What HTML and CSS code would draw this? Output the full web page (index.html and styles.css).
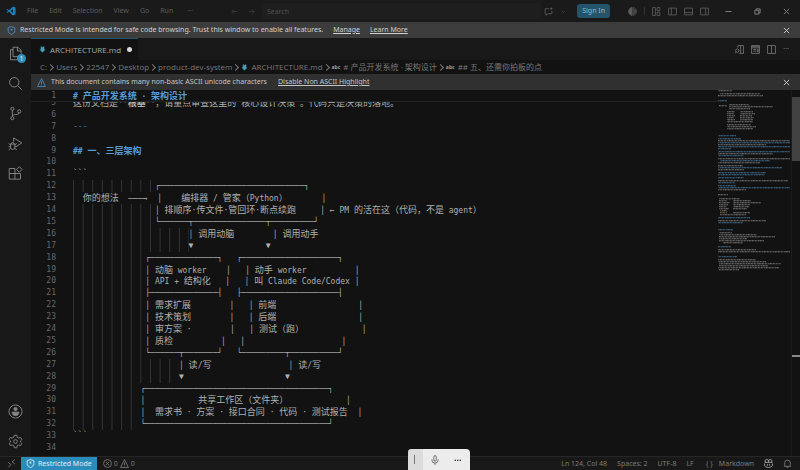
FILE: index.html
```html
<!DOCTYPE html>
<html lang="zh-CN">
<head>
    <meta charset="UTF-8">
    <meta name="viewport" content="width=device-width, initial-scale=1.0">
    <title>ARCHITECTURE.md</title>
    <link rel="stylesheet" href="styles.css">
</head>
<body>
    <header class="titlebar">
        <svg class="logo" viewBox="0 0 20 20"><path d="M14 1l5 2v14l-5 2-8-7.500L2.500 14 1 13l3.500-3L1 7l1.500-1L6 8.500zM14 6l-5 4 5 4z" fill="#1f7fb8" fill-rule="evenodd"/></svg>
        <nav class="menu">
            <button>File</button>
            <button>Edit</button>
            <button>Selection</button>
            <button>View</button>
            <button>Go</button>
            <button>Run</button>
            <button aria-label="More">···</button>
        </nav>
        <div class="history">
            <button aria-label="Back"><svg class="icon" viewBox="0 0 16 16"><path d="M14 8H2M7 3L2 8l5 5"/></svg></button>
            <button aria-label="Forward"><svg class="icon" viewBox="0 0 16 16"><path d="M2 8h12M9 3l5 5-5 5"/></svg></button>
        </div>
        <input class="search" type="text" placeholder="Search" aria-label="Search">
        <div class="chat">
            <button aria-label="Chat"><svg class="icon wide" viewBox="0 0 16 16"><path d="M9 3H2v9h2v3l3-3h7V7M11 3h4M13 1v4"/></svg></button>
            <button aria-label="Chat menu"><svg class="icon small" viewBox="0 0 16 16"><path d="M3 6l5 5 5-5"/></svg></button>
        </div>
        <button class="signin">Sign In</button>
        <div class="layout">
            <button aria-label="Agents"><svg class="icon wide" viewBox="0 0 16 16"><path d="M7 1v14C3 14 1 11 1 8s2-6 6-7z" fill="currentColor"/><path d="M9 1c4 1 6 4 6 7s-2 6-6 7zM11 4v8M13 5v6"/></svg></button>
            <span class="divider"></span>
            <button aria-label="Customize layout"><svg class="icon wide" viewBox="0 0 16 16"><path d="M1 1h5v14H1zM9 1h5v5H9zM9 9h5v6H9z"/></svg></button>
            <button aria-label="Toggle side bar"><svg class="icon wide" viewBox="0 0 16 16"><path d="M1 2h14v12H1zM6 2v12"/></svg></button>
            <button aria-label="Toggle panel"><svg class="icon wide" viewBox="0 0 16 16"><path d="M1 2h14v12H1zM1 10h14"/></svg></button>
            <button aria-label="Toggle secondary side bar"><svg class="icon wide" viewBox="0 0 16 16"><path d="M1 2h14v12H1zM10 2v12"/></svg></button>
        </div>
        <div class="window-buttons">
            <button aria-label="Minimize"><svg class="icon" viewBox="0 0 16 16"><path d="M1 8h14"/></svg></button>
            <button aria-label="Restore"><svg class="icon" viewBox="0 0 16 16"><path d="M2 5h9v9H2zM5 5V2h9v9h-3"/></svg></button>
            <button aria-label="Close"><svg class="icon" viewBox="0 0 16 16"><path d="M2 2l12 12M14 2L2 14"/></svg></button>
        </div>
    </header>

    <div class="banner">
        <svg class="icon wide shield" viewBox="0 0 16 16"><path d="M8 1l6 2v5c0 4-3 6-6 7-3-1-6-3-6-7V3z"/><path d="M8 5v3" stroke-width="3"/></svg>
        <span>Restricted Mode is intended for safe code browsing. Trust this window to enable all features.</span>
        <a href="#">Manage</a>
        <a href="#">Learn More</a>
        <button class="close" aria-label="Close banner"><svg class="icon" viewBox="0 0 16 16"><path d="M2 2l12 12M14 2L2 14"/></svg></button>
    </div>

    <div class="workbench">
        <aside class="activity">
            <button aria-label="Explorer">
                <svg viewBox="0 0 24 24"><path d="M8 17V2h8l5 5v10zM15 2v6h6M8 6H4v16h12v-5"/></svg>
                <span class="badge">1</span>
            </button>
            <button aria-label="Search"><svg viewBox="0 0 24 24"><circle cx="10" cy="10" r="7.500"/><path d="M15.500 15.500L22 22"/></svg></button>
            <button aria-label="Source control"><svg viewBox="0 0 24 24"><circle cx="7" cy="4.500" r="2.500"/><circle cx="7" cy="19.500" r="2.500"/><circle cx="18" cy="8.500" r="2.500"/><path d="M7 7v10M18 11c0 4-11 1-11 6"/></svg></button>
            <button aria-label="Run and debug"><svg viewBox="0 0 24 24"><path d="M9 9V3l13 8-9 6"/><path d="M4 13h7v5a3.500 3.500 0 0 1-7 0zM5 13a2.500 2.500 0 0 1 5 0M1 12l3 2M14 12l-3 2M1 17h3M11 17h3M1 22l3-2M14 22l-3-2"/></svg></button>
            <button aria-label="Extensions"><svg viewBox="0 0 24 24"><path d="M11 4H2v17h18v-9H2M11 4v17"/><path d="M18 1l4.500 4.500L18 10l-4.500-4.500z"/></svg></button>
            <span class="spacer"></span>
            <button aria-label="Accounts"><svg viewBox="0 0 24 24"><circle cx="12" cy="12" r="10.500"/><circle cx="12" cy="8" r="2.500" fill="currentColor"/><path d="M6.500 13h11c0 3-2 5.500-5.500 5.500S6.500 16 6.500 13z" fill="currentColor"/></svg></button>
            <button aria-label="Settings"><svg viewBox="0 0 24 24"><path d="M10 2h4l.7 3.200 2.300 1.300 3.200-1 2 3.500-2.400 2.200v1.600l2.400 2.200-2 3.500-3.200-1-2.300 1.300L14 22h-4l-.7-3.200L7 17.500l-3.200 1-2-3.500 2.400-2.200v-1.600L1.800 9l2-3.500 3.200 1 2.300-1.300z"/><circle cx="12" cy="12" r="3"/></svg></button>
        </aside>

        <main class="editor">
            <div class="tabs">
                <div class="tab">
                    <svg class="md" viewBox="0 0 16 16"><path d="M4 1h3v2h2V1h3v7h3l-7 7-7-7h3z"/></svg>
                    <span>ARCHITECTURE.md</span>
                    <span class="dirty"></span>
                </div>
                <div class="tab-actions">
                    <button aria-label="Open preview"><svg class="icon wide" viewBox="0 0 16 16"><path d="M5 5V1h10v14H8M10 1v14"/><circle cx="4" cy="10" r="3"/><path d="M2 12l-2 3"/></svg></button>
                    <button aria-label="Open changes"><svg class="icon wide" viewBox="0 0 16 16"><path d="M1 1h14v14H1zM1 5h14M4 8h5M4 11h5M11 8h2v4h-2zM1 3h14"/></svg></button>
                    <button aria-label="Split editor"><svg class="icon wide" viewBox="0 0 16 16"><path d="M1 1h14v14H1zM8 1v14"/></svg></button>
                    <button aria-label="More actions">···</button>
                </div>
            </div>

            <nav class="breadcrumbs">
                <span>C:</span>
                <span>Users</span>
                <span>22547</span>
                <span>Desktop</span>
                <span>product-dev-system</span>
                <span><svg class="md" viewBox="0 0 16 16"><path d="M4 1h3v2h2V1h3v7h3l-7 7-7-7h3z"/></svg>ARCHITECTURE.md</span>
                <span><b>abc</b># 产品开发系统 · 架构设计</span>
                <span><b>abc</b>## 五、还需你拍板的点</span>
            </nav>

            <div class="notice">
                <svg class="icon wide warn" viewBox="0 0 16 16"><path d="M8 1l7 14H1zM8 6v5M8 12v1"/></svg>
                <span>This document contains many non-basic ASCII unicode characters</span>
                <a href="#">Disable Non ASCII Highlight</a>
                <button class="close" aria-label="Close notice"><svg class="icon" viewBox="0 0 16 16"><path d="M2 2l12 12M14 2L2 14"/></svg></button>
            </div>

            <div class="panes">
                <div class="code">
                    <div class="sticky"></div>
                    <div class="lines"></div>
                </div>
                <canvas class="minimap" width="73" height="366"></canvas>
                <div class="scrollbar">
                    <div class="thumb"></div>
                    <div class="marker"></div>
                </div>
            </div>
        </main>
    </div>

    <footer class="status">
        <button class="remote" aria-label="Remote"><svg class="icon wide" viewBox="0 0 16 16"><path d="M2 6l5 4-5 5M14 1L9 5l5 4"/></svg></button>
        <button class="restricted"><svg class="icon wide" viewBox="0 0 16 16"><path d="M8 1l6 2v5c0 4-3 6-6 7-3-1-6-3-6-7V3z"/><path d="M8 5v3" stroke-width="3"/></svg>Restricted Mode</button>
        <button class="problems"><svg class="icon wide" viewBox="0 0 16 16"><circle cx="8" cy="8" r="7"/><path d="M5 5l6 6M11 5l-6 6"/></svg>0<svg class="icon wide" viewBox="0 0 16 16"><path d="M8 1l7 14H1zM8 6v5M8 12v1"/></svg>0</button>
        <div class="status-right">
            <button>Ln 124, Col 48</button>
            <button>Spaces: 2</button>
            <button>UTF-8</button>
            <button>LF</button>
            <button><span class="braces">{ }</span>Markdown</button>
            <button aria-label="Copilot"><svg class="icon wide bright" viewBox="0 0 16 16"><path d="M2 7V3q0-2 3-2 3 0 3 2 0-2 3-2 3 0 3 2v4M2 6h12M8 3v3M1 8v4c3 4 11 4 14 0V8M6 9v3M10 9v3"/></svg></button>
            <button aria-label="Notifications"><svg class="icon wide" viewBox="0 0 16 16"><path d="M3 12V7a5 5 0 0 1 10 0v5l1 1H2zM6 13a2 2 0 0 0 4 0"/></svg></button>
        </div>
    </footer>

    <div class="voice">
        <span class="grip"></span>
        <button aria-label="Microphone"><svg viewBox="0 0 16 16"><path d="M6 3a2 2 0 0 1 4 0v5a2 2 0 0 1-4 0zM3 7v1a5 5 0 0 0 10 0V7M8 13v3"/></svg></button>
        <button class="dots" aria-label="Voice options">···</button>
    </div>

    <script src="script.js"></script>
</body>
</html>
```
FILE: styles.css
```css
* {
    box-sizing: border-box;
}

body {
    margin: 0;
    height: 100vh;
    display: flex;
    flex-direction: column;
    overflow: hidden;
    background: #121212;
    color: #8c8c8c;
    font-family: "Noto Sans", "Noto Sans CJK SC", sans-serif;
    font-size: 7px;
    line-height: 12px;
}

button {
    display: flex;
    align-items: center;
    padding: 0;
    border: none;
    background: none;
    color: inherit;
    font: inherit;
    white-space: nowrap;
}

a {
    color: inherit;
}

svg {
    display: block;
    flex: none;
    fill: none;
    stroke: currentColor;
}

.icon {
    width: 7px;
    height: 7px;
    stroke-width: 2;
}

.icon.wide {
    width: 9px;
    height: 9px;
    stroke-width: 1.5;
}

.icon.small {
    width: 5px;
    height: 5px;
}

/* Title bar */
.titlebar {
    display: flex;
    align-items: center;
    height: 22px;
    flex: none;
    padding: 0 10px 0 6px;
    background: #1a1a1a;
    color: #5c5c5c;
}

.logo {
    width: 10px;
    height: 10px;
    stroke: none;
}

.menu {
    display: flex;
    gap: 11px;
    margin-left: 11px;
}

.menu button:last-child {
    margin-left: 3px;
}

.history {
    display: flex;
    gap: 10px;
    margin: 0 7px 0 38px;
    color: #3c3c3c;
}

.search {
    flex: 1;
    min-width: 0;
    height: 16px;
    padding: 0 5px;
    border: none;
    border-radius: 3px;
    background: #1e1e1e;
    color: #545454;
    font: inherit;
}

.search::placeholder {
    color: #505050;
}

.chat {
    display: flex;
    gap: 8px;
    margin: 0 11px 0 3px;
}

.signin {
    height: 14px;
    padding: 0 5px;
    border-radius: 3px;
    background: #23546b;
    color: #9cb4c0;
}

.layout {
    display: flex;
    align-items: center;
    gap: 7px;
    margin-left: 18px;
}

.divider {
    width: 1px;
    height: 8px;
    background: #333;
}

.window-buttons {
    display: flex;
    gap: 22px;
    margin-left: 16px;
    color: #8a8a8a;
}

/* Restricted mode banner */
.banner {
    display: flex;
    align-items: center;
    gap: 10px;
    height: 16px;
    flex: none;
    padding: 0 10px 0 7px;
    background: #3c3c3c;
    color: #d0d0d0;
}

.shield,
.warn {
    margin-right: -6px;
    color: #4a90c8;
}

.close {
    margin-left: auto;
    color: #d8d8d8;
}

/* Activity bar */
.workbench {
    display: flex;
    flex: 1;
    min-height: 0;
}

.activity {
    display: flex;
    flex-direction: column;
    align-items: center;
    gap: 15px;
    width: 31px;
    padding: 8px 0 7px;
    background: #181818;
    color: #868686;
}

.activity button {
    position: relative;
}

.activity svg {
    width: 15px;
    height: 15px;
    stroke-width: 1.5;
}

.badge {
    position: absolute;
    right: -3px;
    bottom: -2px;
    width: 9px;
    height: 9px;
    border-radius: 50%;
    background: #2f8fbe;
    color: #e0eef5;
    font-size: 7px;
    line-height: 9px;
    text-align: center;
}

.spacer {
    flex: 1;
}

/* Editor */
.editor {
    display: flex;
    flex-direction: column;
    flex: 1;
    min-width: 0;
}

.tabs {
    display: flex;
    justify-content: space-between;
    height: 22px;
    flex: none;
    background: #181818;
}

.tab {
    display: flex;
    align-items: center;
    gap: 4px;
    padding: 0 6px 0 8px;
    border-top: 1px solid #23536a;
    background: #121212;
    color: #a8a8a8;
    font-family: "Open Sans", sans-serif;
    font-size: 8px;
}

.md {
    width: 7px;
    height: 7px;
    fill: #4a9cb4;
    stroke: none;
}

.dirty {
    width: 5px;
    height: 5px;
    margin-left: 2px;
    border-radius: 50%;
    background: #d8d8d8;
}

.tab-actions {
    display: flex;
    align-items: center;
    gap: 7px;
    padding-right: 11px;
    color: #747474;
}

.breadcrumbs {
    display: flex;
    align-items: center;
    height: 14px;
    flex: none;
    padding-left: 9px;
    color: #787878;
    font-family: "Open Sans", "Noto Sans CJK SC", sans-serif;
    font-size: 8px;
    white-space: nowrap;
}

.breadcrumbs span {
    display: flex;
    align-items: center;
    gap: 3px;
}

.breadcrumbs span + span::before {
    content: "";
    width: 4px;
    height: 4px;
    margin-left: 1px;
    border: solid #787878;
    border-width: 1px 1px 0 0;
    transform: rotate(45deg);
}

.breadcrumbs b {
    color: #a0a0a0;
    font-size: 5px;
}

.notice {
    display: flex;
    align-items: center;
    gap: 11px;
    height: 16px;
    flex: none;
    padding: 0 10px 0 6px;
    background: #303030;
    color: #c4c4c4;
}

.panes {
    display: flex;
    flex: 1;
    min-height: 0;
}

.code {
    display: flex;
    flex-direction: column;
    flex: 1;
    min-width: 0;
    overflow: hidden;
    color: #b0b0b0;
    font-family: "DejaVu Sans Mono", "Noto Sans CJK SC", monospace;
    font-size: 8px;
}

.sticky {
    z-index: 1;
    flex: none;
    height: 12px;
    border-bottom: 1px solid #222;
    background: #121212;
}

/* the first visible line is scrolled half under the sticky heading */
.lines {
    display: grid;
    grid-auto-rows: minmax(0, 1fr);
    flex: 1;
    min-height: 0;
    margin-top: -5px;
    padding-bottom: 2px;
}

.line {
    display: flex;
    white-space: pre;
}

.number {
    width: 25px;
    margin-right: 17px;
    color: #686868;
    text-align: right;
}

.guides {
    background: linear-gradient(90deg, #343434 1px, transparent 1px) 0 0 / 2ch 100%;
}

.cjk {
    font-size: 9px;
}

.heading {
    color: #569cd6;
    font-weight: bold;
}

.rule {
    color: #4682b0;
}

.minimap {
    flex: none;
    width: 73px;
    height: 366px;
}

.scrollbar {
    width: 9px;
    flex: none;
    border-left: 1px solid #1c1c1c;
}

.thumb {
    height: 64px;
    margin-top: 7px;
    background: #424242;
}

.marker {
    height: 2px;
    margin-top: 194px;
    background: #8a8a8a;
}

/* Status bar */
.status {
    display: flex;
    align-items: center;
    height: 14px;
    flex: none;
    border-top: 1px solid #262626;
    background: #181818;
    color: #7c7c7c;
}

.remote {
    width: 21px;
    padding-left: 7px;
}

.restricted {
    gap: 3px;
    height: 13px;
    padding: 0 5px;
    background: #2a8cba;
    color: #e0eef5;
}

.problems {
    gap: 2px;
    margin-left: 6px;
}

.status-right {
    display: flex;
    align-items: center;
    gap: 10px;
    margin-left: auto;
    padding-right: 8px;
}

.braces {
    margin: 0 6px 0 2px;
}

.bright {
    color: #b0b0b0;
}

/* Floating voice typing bar */
.voice {
    position: absolute;
    left: 51%;
    bottom: 0;
    display: flex;
    align-items: center;
    gap: 14px;
    height: 21px;
    padding-right: 8px;
    overflow: hidden;
    border-radius: 4px 4px 0 0;
    background: #ececec;
    color: #333;
}

.voice svg {
    width: 10px;
    height: 10px;
}

.dots {
    font-size: 9px;
    font-weight: bold;
}

.grip {
    width: 15px;
    height: 21px;
    margin-right: -7px;
    border: solid #dcdcdc;
    border-width: 6px 8px 6px 6px;
    background: #777;
}
```
FILE: script.js
```js
const FIRST_LINE = 5;
const bar = n => '─'.repeat(n);
const gap = n => ' '.repeat(n);

const source = [
    '这份文档是**根基**，请重点审查这里的“核心设计决策”。代码只是决策的落地。',
    '',
    '---',
    '',
    '## 一、三层架构',
    '',
    '```',
    gap(17) + '┌' + bar(30) + '┐',
    '  你的想法  ───→  │    编排器 / 管家（Python）' + gap(7) + '│',
    gap(17) + '│ 排顺序·传文件·管回环·断点续跑' + gap(5) + '│ ← PM 的活在这（代码，不是 agent）',
    gap(17) + '└' + bar(6) + '┬' + bar(15) + '┬' + bar(9) + '┘',
    gap(24) + '│ 调用动脑' + gap(8) + '│ 调用动手',
    gap(24) + '▼' + gap(15) + '▼',
    gap(15) + '┌' + bar(14) + '┐   ┌' + bar(20) + '┐',
    gap(15) + '│ 动脑 worker    │   │ 动手 worker' + gap(10) + '│',
    gap(15) + '│ API + 结构化   │   │ 叫 Claude Code/Codex │',
    gap(15) + '├' + bar(14) + '┤   ├' + bar(20) + '┤',
    gap(15) + '│ 需求扩展' + gap(8) + '│   │ 前端' + gap(17) + '│',
    gap(15) + '│ 技术策划' + gap(8) + '│   │ 后端' + gap(17) + '│',
    gap(15) + '│ 审方案 ·' + gap(8) + '│   │ 测试（跑）' + gap(12) + '│',
    gap(15) + '│ 质检' + gap(10) + '│   │' + gap(20) + '│',
    gap(15) + '└' + bar(6) + '┬' + bar(7) + '┘   └' + bar(9) + '┬' + bar(10) + '┘',
    gap(22) + '│ 读/写' + gap(16) + '│ 读/写',
    gap(22) + '▼' + gap(21) + '▼',
    gap(14) + '┌' + bar(38) + '┐',
    gap(14) + '│' + gap(11) + '共享工作区（文件夹）' + gap(12) + '│',
    gap(14) + '│  需求书 · 方案 · 接口合同 · 代码 · 测试报告  │',
    gap(14) + '└' + bar(38) + '┘',
    '```',
    ''
];

function span(className, text) {
    const el = document.createElement('span');
    el.className = className;
    el.textContent = text;
    return el;
}

function renderLine(number, text) {
    const line = document.createElement('div');
    line.className = 'line';
    line.append(span('number', number));

    const indent = text.match(/^ */)[0];
    if (indent) line.append(span('guides', indent));

    const code = span('text', '');
    if (text.startsWith('#')) code.classList.add('heading');
    if (text === '---') code.classList.add('rule');

    // wide characters are set one size up from the latin text
    text.slice(indent.length).split(/([\u3000-\u9fff\uff00-\uffef]+)/).forEach(part => {
        if (/[\u3000-\u9fff\uff00-\uffef]/.test(part)) {
            const wide = span('cjk', part);
            if (part === '根基') wide.style.fontWeight = 'bold';
            code.append(wide);
        } else {
            code.append(part);
        }
    });
    line.append(code);
    return line;
}

document.querySelector('.sticky').append(renderLine(1, '# 产品开发系统 · 架构设计'));
const lines = document.querySelector('.lines');
source.forEach((text, i) => lines.append(renderLine(FIRST_LINE + i, text)));

// Minimap rows: top, left, width, colour
const ctx = document.querySelector('.minimap').getContext('2d');
const GREY = '#686868';
const BLUE = '#3c6480';
const rows = [
    [0, 0, 14, GREY], [3, 2, 40, GREY], [5, 0, 45, GREY], [10, 0, 9, BLUE],
    [15, 1, 8, GREY], [14, 11, 20, GREY], [16, 11, 44, GREY], [18, 11, 21, GREY],
    [21, 9, 8, GREY], [21, 22, 13, GREY], [23, 9, 7, GREY], [23, 22, 15, GREY], [25, 9, 8, GREY], [25, 22, 12, GREY],
    [27, 9, 7, GREY], [27, 22, 14, GREY], [29, 9, 8, GREY], [29, 22, 13, GREY], [31, 9, 26, GREY],
    [34, 9, 24, GREY], [36, 9, 29, GREY], [38, 9, 26, GREY],
    [45, 0, 18, BLUE], [48, 0, 23, BLUE], [50, 0, 72, GREY], [52, 0, 72, BLUE], [54, 0, 48, GREY], [56, 0, 72, BLUE],
    [58, 0, 13, BLUE], [61, 0, 72, BLUE], [63, 0, 55, GREY], [65, 0, 26, BLUE], [68, 0, 72, GREY], [70, 2, 50, BLUE],
    [72, 0, 42, GREY], [75, 0, 25, GREY], [77, 0, 64, BLUE], [79, 0, 26, GREY], [82, 0, 48, BLUE], [84, 0, 47, BLUE],
    [87, 0, 26, BLUE], [90, 0, 70, GREY], [92, 0, 17, BLUE], [95, 0, 18, BLUE], [97, 0, 72, BLUE], [99, 0, 28, GREY],
    [104, 0, 10, GREY],
    [108, 1, 21, GREY], [110, 1, 8, GREY], [110, 15, 18, GREY], [112, 1, 11, GREY], [112, 15, 28, GREY],
    [114, 1, 9, GREY], [114, 15, 17, GREY], [116, 1, 8, GREY], [116, 15, 16, GREY], [118, 1, 10, GREY], [118, 15, 14, GREY],
    [120, 2, 7, GREY], [122, 2, 7, '#6c5c3c'], [122, 15, 17, GREY], [124, 2, 26, GREY],
    [127, 0, 32, BLUE], [130, 0, 48, GREY], [132, 0, 25, BLUE], [139, 0, 15, BLUE],
    [142, 1, 13, GREY], [144, 1, 38, GREY], [146, 1, 56, GREY], [148, 1, 28, GREY], [150, 1, 45, GREY], [152, 5, 20, GREY],
    [156, 0, 13, BLUE], [159, 0, 38, GREY], [161, 0, 72, GREY], [166, 0, 19, BLUE],
    [169, 0, 38, GREY], [171, 0, 48, GREY], [173, 1, 62, GREY], [175, 1, 49, GREY], [177, 0, 61, GREY], [179, 1, 20, GREY]
];

rows.forEach(([top, left, width, colour], i) => {
    ctx.fillStyle = colour;
    for (let x = 0; x < width; x++) {
        // uneven opacity gives the look of tiny words
        const alpha = 0.4 + ((x * 7 + i * 5) % 11) / 18;
        ctx.globalAlpha = alpha;
        ctx.fillRect(left + x, top, 1, 1);
        ctx.globalAlpha = alpha / 3;
        ctx.fillRect(left + x, top + 1, 1, 1);
    }
});
```
